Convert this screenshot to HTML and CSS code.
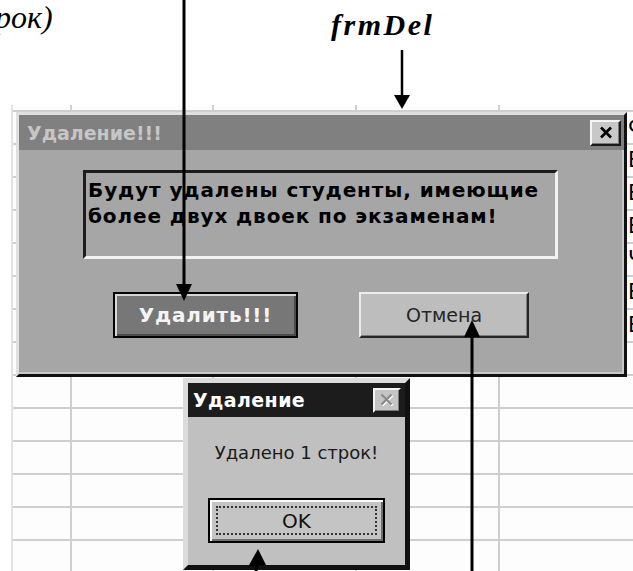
FILE: index.html
```html
<!DOCTYPE html>
<html lang="ru">
<head>
<meta charset="utf-8">
<title>frmDel</title>
<link rel="stylesheet" href="styles.css">
</head>
<body>
<div class="page">
  <div class="caption caption-left">рок)</div>
  <div class="caption caption-form">frmDel</div>

  <!-- worksheet behind the forms -->
  <div class="sheet">
    <div class="sheet-tail">
      <span>Ф</span><span>В</span><span>В</span><span>В</span><span>Ч</span><span>В</span><span>Б</span>
    </div>
  </div>

  <!-- user form frmDel -->
  <section class="win win-del">
    <header class="win-title win-title-del">
      <span class="win-caption">Удаление!!!</span>
      <button class="win-close" type="button" aria-label="Закрыть">
        <svg width="14" height="13" viewBox="0 0 14 13"><path d="M2 1.5 L12 11.5 M12 1.5 L2 11.5" stroke="#000" stroke-width="2.6" fill="none"/></svg>
      </button>
    </header>
    <div class="win-body win-body-del">
      <div class="msg-box">Будут удалены студенты, имеющие<br>более двух двоек по экзаменам!</div>
      <div class="btn-row">
        <button class="btn btn-delete" type="button">Удалить!!!</button>
        <button class="btn btn-cancel" type="button">Отмена</button>
      </div>
    </div>
  </section>

  <!-- message box shown after deleting -->
  <section class="win win-info">
    <header class="win-title win-title-info">
      <span class="win-caption">Удаление</span>
      <button class="win-close win-close-off" type="button" aria-label="Закрыть" disabled>
        <svg width="16" height="14" viewBox="0 0 16 14"><path d="M3.5 2.5 L13.5 12.5 M13.5 2.5 L3.5 12.5" stroke="#fff" stroke-width="2.4" fill="none"/><path d="M2.5 1.5 L12.5 11.5 M12.5 1.5 L2.5 11.5" stroke="#8a8a8a" stroke-width="2.4" fill="none"/></svg>
      </button>
    </header>
    <div class="win-body win-body-info">
      <p class="info-text">Удалено 1 строк!</p>
      <button class="btn btn-ok" type="button"><span class="focus-ring">OK</span></button>
    </div>
  </section>

  <!-- callout arrows -->
  <svg class="arrows" width="633" height="571" viewBox="0 0 633 571">
    <line x1="184" y1="0" x2="184" y2="286" stroke="#000" stroke-width="3"/>
    <polygon points="176,284 192,284 184,301" fill="#000"/>
    <line x1="402" y1="50" x2="402" y2="96" stroke="#000" stroke-width="2.5"/>
    <polygon points="394,95 410,95 402,109" fill="#000"/>
    <line x1="472" y1="336" x2="472" y2="571" stroke="#000" stroke-width="3"/>
    <polygon points="464,337 480,337 472,320" fill="#000"/>
    <line x1="257" y1="564" x2="256" y2="571" stroke="#000" stroke-width="3"/>
    <polygon points="258,549 248,567 266,565" fill="#000"/>
  </svg>
</div>
</body>
</html>
```
FILE: styles.css
```css
* { box-sizing: border-box; }

html, body {
  margin: 0;
  padding: 0;
  background: #fff;
}

.page {
  position: relative;
  width: 633px;
  height: 571px;
  overflow: hidden;
  font-family: "DejaVu Sans", "Liberation Sans", sans-serif;
}

/* annotation labels */
.caption {
  position: absolute;
  font-family: "Liberation Serif", "Times New Roman", serif;
  font-style: italic;
  color: #000;
  line-height: 1;
  white-space: nowrap;
}
.caption-left {
  left: -5px;
  top: 1px;
  font-size: 32px;
}
.caption-form {
  left: 331px;
  top: 10px;
  font-size: 30px;
  font-weight: bold;
  letter-spacing: 2.5px;
}

/* spreadsheet grid */
.sheet {
  position: absolute;
  left: 11px;
  top: 105px;
  right: 0;
  bottom: 0;
  padding-top: 5px;
  border-left: 2px solid #e2e2e2;
  background-color: #fdfdfd;
  background-image:
    repeating-linear-gradient(to bottom, #cfcfcf 0 2px, transparent 2px 33px),
    linear-gradient(#cfcfcf, #cfcfcf),
    linear-gradient(#cfcfcf, #cfcfcf),
    linear-gradient(#cfcfcf, #cfcfcf),
    linear-gradient(#cfcfcf, #cfcfcf);
  background-position: 0 5px, 57px 0, 199px 0, 342px 0, 485px 0;
  background-size: 100% 100%, 2px 100%, 2px 100%, 2px 100%, 2px 100%;
  background-repeat: no-repeat;
}
.sheet-tail {
  display: flex;
  flex-direction: column;
  margin-left: 615px;
}
.sheet-tail span {
  height: 33px;
  display: flex;
  align-items: center;
  font-size: 21px;
  color: #000;
}

/* windows */
.win {
  position: absolute;
  display: flex;
  flex-direction: column;
  border-style: solid;
}
.win-title {
  display: flex;
  align-items: center;
  justify-content: space-between;
  flex: none;
}
.win-caption {
  font-weight: bold;
  white-space: nowrap;
}
.win-close {
  display: flex;
  align-items: center;
  justify-content: center;
  padding: 0;
  margin: 0;
  background: #c8c8c8;
  border: 2px solid;
  border-color: #f4f4f4 #1a1a1a #1a1a1a #f4f4f4;
  box-shadow: inset -1px -1px 0 #7a7a7a;
}
.win-body {
  flex: 1;
  display: flex;
  flex-direction: column;
}

/* frmDel */
.win-del {
  left: 16px;
  top: 112px;
  width: 611px;
  height: 265px;
  border-width: 3px;
  border-color: #e0e0e0 #111 #111 #e0e0e0;
  background: #a6a6a6;
}
.win-title-del {
  height: 35px;
  padding: 0 3px 0 8px;
  background: #808080;
  color: #c6c6c6;
  font-size: 19px;
}
.win-del .win-close {
  width: 31px;
  height: 26px;
}
.win-body-del {
  padding: 20px 0 0 64px;
  box-shadow: inset -2px -2px 0 #c9c9c9;
}
.msg-box {
  width: 475px;
  height: 89px;
  padding: 4px 0 0 2px;
  border: 3px solid;
  border-color: #1c1c1c #f2f2f2 #f2f2f2 #1c1c1c;
  font-weight: bold;
  font-size: 20px;
  line-height: 26px;
  letter-spacing: 0.9px;
  color: #000;
}
.btn-row {
  display: flex;
  gap: 61px;
  margin: 33px 0 0 30px;
}
.btn {
  display: flex;
  align-items: center;
  justify-content: center;
  height: 46px;
  padding: 0;
  margin: 0;
  font-family: "DejaVu Sans", "Liberation Sans", sans-serif;
}
.btn-delete {
  width: 185px;
  background: #777;
  border: 2px solid #050505;
  box-shadow: inset 2px 2px 0 #d6d6d6, inset -2px -2px 0 #4c4c4c;
  color: #f4f4f4;
  font-weight: bold;
  font-size: 20px;
  letter-spacing: 0.8px;
}
.btn-cancel {
  width: 170px;
  background: #bdbdbd;
  border: 2px solid;
  border-color: #ececec #262626 #262626 #ececec;
  box-shadow: inset -1px -1px 0 #7c7c7c;
  color: #262626;
  font-size: 19px;
}

/* message box */
.win-info {
  left: 183px;
  top: 378px;
  width: 227px;
  height: 192px;
  border-width: 5px;
  border-color: #dcdcdc #111 #111 #dcdcdc;
  background: #c0c0c0;
}
.win-title-info {
  height: 34px;
  padding: 0 4px 0 5px;
  background: #1c1c1c;
  color: #fff;
  font-size: 19px;
  letter-spacing: 0.4px;
}
.win-info .win-close {
  width: 28px;
  height: 25px;
  background: #c4c4c4;
}
.win-body-info {
  align-items: center;
}
.info-text {
  margin: 25px 0 0;
  font-size: 18px;
  line-height: 22px;
  color: #1a1a1a;
  white-space: nowrap;
}
.btn-ok {
  width: 177px;
  height: 45px;
  margin-top: 34px;
  padding: 6px;
  background: #c4c4c4;
  border: 2px solid #000;
  box-shadow: inset 2px 2px 0 #fafafa, inset -2px -2px 0 #6e6e6e;
  font-size: 20px;
  color: #111;
}
.focus-ring {
  flex: 1;
  align-self: stretch;
  display: flex;
  align-items: center;
  justify-content: center;
  border: 2px dotted #333;
}

.arrows {
  position: absolute;
  left: 0;
  top: 0;
  pointer-events: none;
}
```
